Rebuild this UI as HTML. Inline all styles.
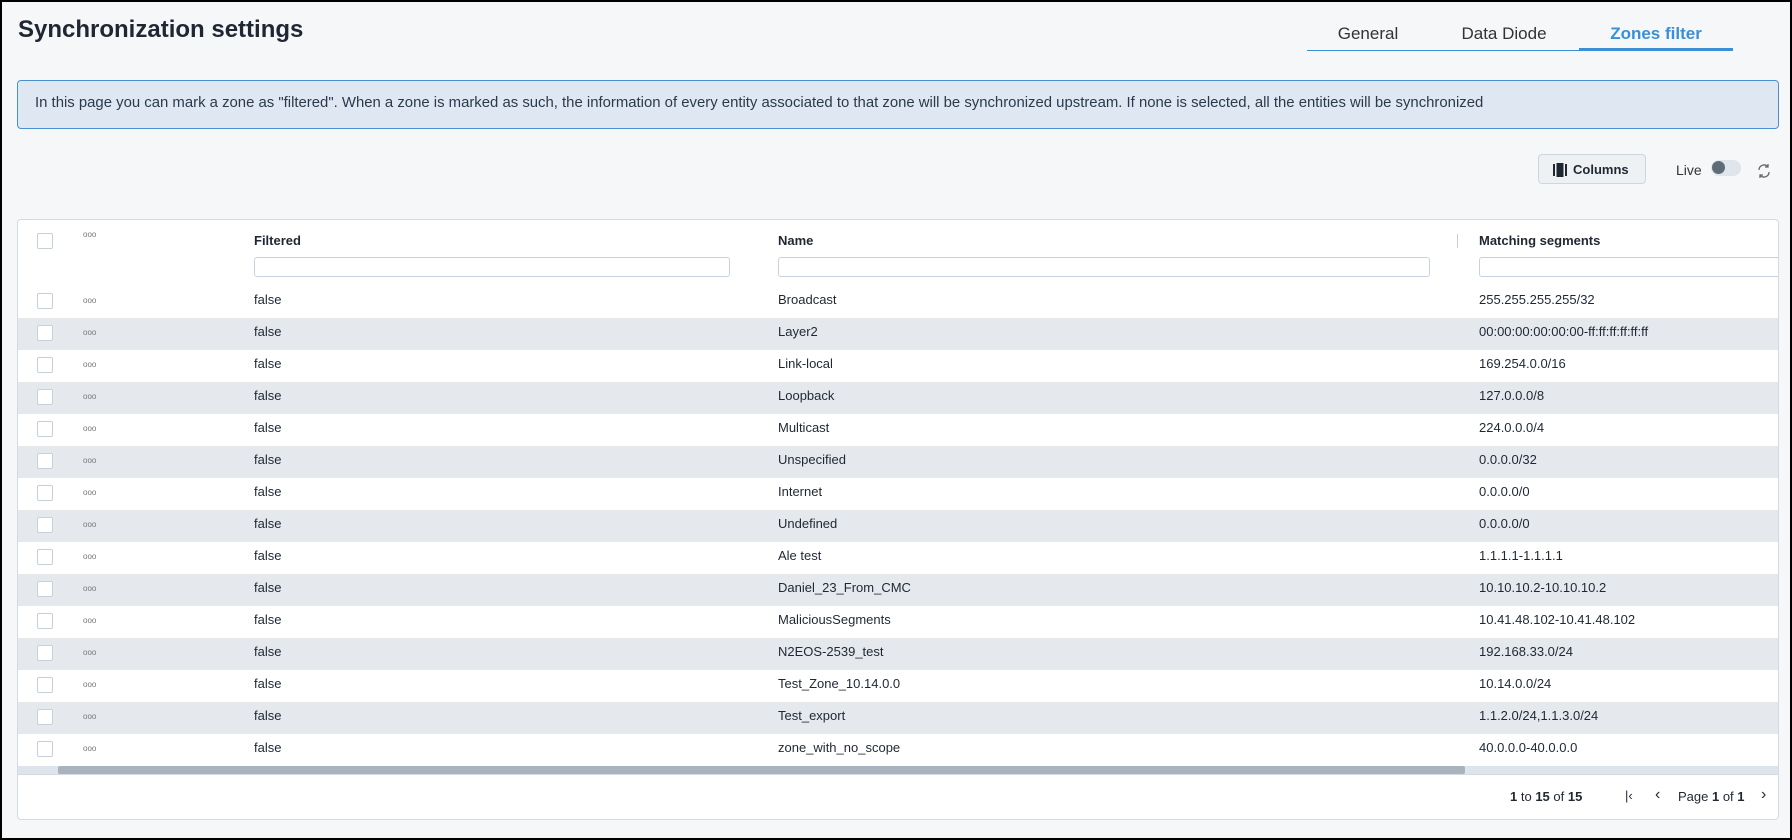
<!DOCTYPE html>
<html><head><meta charset="utf-8"><style>
*{box-sizing:border-box;margin:0;padding:0}
body{width:1792px;height:840px;background:#000;font-family:"Liberation Sans",sans-serif;color:#1f2733;overflow:hidden;position:relative}
.page{position:absolute;left:2px;top:2px;width:1788px;height:836px;background:#f6f7f9}
.abs{position:absolute}
h1{position:absolute;left:16px;top:14px;font-size:24px;font-weight:bold;color:#1f2733}
.tab{position:absolute;top:22px;font-size:17px;color:#333;transform:translateX(-50%)}
.info{position:absolute;left:15px;top:78px;width:1762px;height:49px;background:#dfe8f2;border:1px solid #4a90d0;border-radius:4px;font-size:14.9px;color:#2a3a4a;padding:14px 0 0 17px;white-space:nowrap}
.btn{position:absolute;left:1536px;top:152px;width:108px;height:30px;border:1px solid #cdd5de;border-radius:4px;background:#eef1f4;font-size:13px;font-weight:bold;padding:7px 0 0 34px}
.table{position:absolute;left:15px;top:217px;width:1762px;height:601px;background:#fff;border:1px solid #d3dae2;border-radius:4px;overflow:hidden}
.row{position:absolute;left:0;width:1762px;height:32px;font-size:13px}
.row.g{background:#e5e9ee}
.row span{position:absolute;top:6px}
.cb{position:absolute;left:19px;width:16px;height:16px;border:1px solid #c7cfd8;border-radius:2px;background:#fff}
.dots{position:absolute;left:65px;font-size:8px;color:#777}
.inp{position:absolute;top:38px;height:20px;border:1px solid #c9d2dc;border-radius:3px;background:#fff}
.hd{position:absolute;top:13px;font-size:13px;font-weight:bold}
</style></head><body><div class="page">
<h1>Synchronization settings</h1>
<div class="tab" style="left:1366px">General</div>
<div class="tab" style="left:1502px">Data Diode</div>
<div class="tab" style="left:1654px;color:#3a8fd6;font-weight:bold">Zones filter</div>
<div class="abs" style="left:1305px;top:48px;width:426px;height:1px;background:#3a8fd6"></div>
<div class="abs" style="left:1577px;top:46px;width:154px;height:3px;background:#3a8fd6"></div>
<div class="info">In this page you can mark a zone as "filtered". When a zone is marked as such, the information of every entity associated to that zone will be synchronized upstream. If none is selected, all the entities will be synchronized</div>
<div class="btn"><svg class="abs" style="left:14px;top:8px" width="14" height="14" viewBox="0 0 14 14"><rect x="0" y="1" width="2" height="12" fill="#1f2733"/><rect x="3.5" y="0" width="7" height="14" fill="#1f2733"/><rect x="12" y="1" width="2" height="12" fill="#1f2733"/></svg>Columns</div>
<div class="abs" style="left:1674px;top:160px;font-size:14px;color:#333">Live</div>
<div class="abs" style="left:1709px;top:158px;width:30px;height:16px;border-radius:8px;background:#dfe5eb"></div>
<div class="abs" style="left:1710px;top:159px;width:13px;height:13px;border-radius:50%;background:#5f6b78"></div>
<svg class="abs" style="left:1754px;top:161px" width="16" height="16" viewBox="0 0 16 16" fill="none" stroke="#666" stroke-width="1.3"><path d="M3 7a5 5 0 0 1 9-3M13 9a5 5 0 0 1-9 3"/><path d="M12 1v3H9M4 15v-3h3"/></svg>
<div class="table">
<div class="cb" style="top:13px"></div><div class="dots" style="top:10px">ooo</div>
<div class="hd" style="left:236px">Filtered</div>
<div class="hd" style="left:760px">Name</div>
<div class="abs" style="left:1439px;top:14px;width:1px;height:14px;background:#ccc"></div>
<div class="hd" style="left:1461px">Matching segments</div>
<div class="inp" style="left:236px;width:476px;top:37px"></div>
<div class="inp" style="left:760px;width:652px;top:37px"></div>
<div class="inp" style="left:1461px;width:310px;top:37px"></div>
<div id="rows"></div>
<div class="abs" style="left:0;top:546px;width:1762px;height:8px;background:#dde4ec"></div>
<div class="abs" style="left:40px;top:546px;width:1407px;height:8px;background:#a9b3bd;border-radius:2px"></div>
<div class="abs" style="left:0;top:554px;width:1762px;height:1px;background:#d3dae2"></div>
<div class="abs" style="left:1492px;top:569px;font-size:13px"><b>1</b> to <b>15</b> of <b>15</b></div>
<div class="abs" style="left:1607px;top:568px;font-size:13px">|&lsaquo;</div>
<div class="abs" style="left:1637px;top:566px;font-size:16px">&lsaquo;</div>
<div class="abs" style="left:1660px;top:569px;font-size:13px">Page <b>1</b> of <b>1</b></div>
<div class="abs" style="left:1743px;top:566px;font-size:16px">&rsaquo;</div>
</div>
</div>
<script>
var d=[["Broadcast","255.255.255.255/32"],["Layer2","00:00:00:00:00:00-ff:ff:ff:ff:ff:ff"],["Link-local","169.254.0.0/16"],["Loopback","127.0.0.0/8"],["Multicast","224.0.0.0/4"],["Unspecified","0.0.0.0/32"],["Internet","0.0.0.0/0"],["Undefined","0.0.0.0/0"],["Ale test","1.1.1.1-1.1.1.1"],["Daniel_23_From_CMC","10.10.10.2-10.10.10.2"],["MaliciousSegments","10.41.48.102-10.41.48.102"],["N2EOS-2539_test","192.168.33.0/24"],["Test_Zone_10.14.0.0","10.14.0.0/24"],["Test_export","1.1.2.0/24,1.1.3.0/24"],["zone_with_no_scope","40.0.0.0-40.0.0.0"]];
var h="";d.forEach(function(r,i){h+='<div class="row'+(i%2?' g':'')+'" style="top:'+(66+i*32)+'px"><div class="cb" style="top:7px"></div><div class="dots" style="top:10px">ooo</div><span style="left:236px">false</span><span style="left:760px">'+r[0]+'</span><span style="left:1461px">'+r[1]+'</span></div>';});
document.getElementById("rows").outerHTML=h;
</script>
</body></html>
